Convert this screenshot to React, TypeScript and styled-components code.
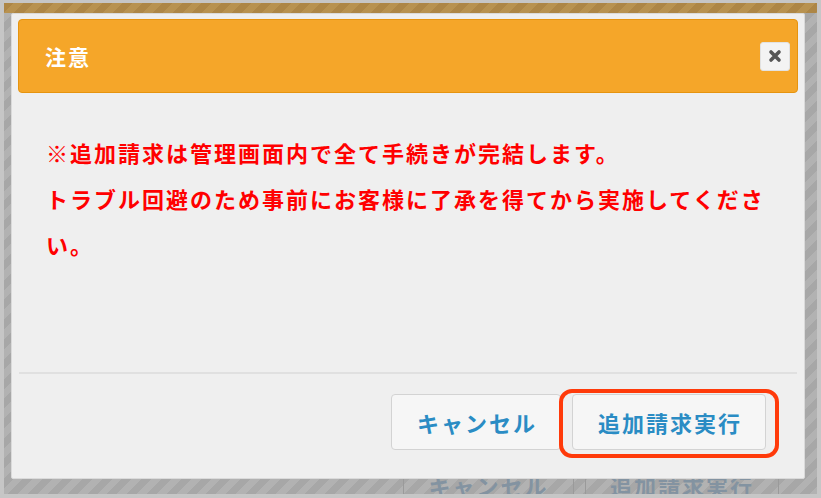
import styled, { createGlobalStyle } from "styled-components";

const GlobalStyle = createGlobalStyle`
  html, body {
    margin: 0;
    padding: 0;
    background: #c6c6c6;
  }
  * {
    box-sizing: border-box;
  }
`;

const font = `"Noto Sans CJK JP", "Noto Sans", sans-serif`;

const Frame = styled.div`
  width: 821px;
  height: 498px;
  border: 4px solid #c6c6c6;
  border-top-width: 3px;
  overflow: hidden;
  font-family: ${font};
`;

const Backdrop = styled.div`
  height: 100%;
  display: flex;
  flex-direction: column;
  background: repeating-linear-gradient(
    135deg,
    #a7a7a7 0px,
    #a7a7a7 7px,
    #b2b2b2 7px,
    #b2b2b2 14px
  );
`;

const TopBand = styled.div`
  height: 10px;
  flex: none;
  background: repeating-linear-gradient(
    135deg,
    #ad8646 0px,
    #ad8646 7px,
    #b89250 7px,
    #b89250 14px
  );
`;

const Modal = styled.div`
  margin: 0 12px 0 7px;
  padding: 5px 6px 6px;
  background: #efefef;
  border: 1px solid #dadada;
  border-radius: 2px;
  flex: none;
`;

const Header = styled.div`
  height: 74px;
  display: flex;
  align-items: center;
  justify-content: space-between;
  padding: 0 7px 0 26px;
  background: #f5a629;
  border: 1px solid #e6940f;
  border-radius: 4px;
`;

const Title = styled.h1`
  margin: 0;
  color: #ffffff;
  font-size: 21px;
  font-weight: 700;
  letter-spacing: 2px;
`;

const CloseButton = styled.button`
  width: 30px;
  height: 29px;
  display: flex;
  align-items: center;
  justify-content: center;
  padding: 0;
  background: #f3f3f3;
  border: 1px solid #e2e2e2;
  border-radius: 3px;
`;

const Body = styled.div`
  height: 279px;
  padding: 36px 28px 0;
`;

const Message = styled.p`
  margin: 0;
  color: #ff0000;
  font-size: 22px;
  font-weight: 700;
  line-height: 46px;
  letter-spacing: 2px;
`;

const Footer = styled.div`
  border-top: 2px solid #e0e0e0;
  margin: 0 1px;
  display: flex;
  justify-content: flex-end;
  gap: 11px;
  padding: 20px 31px 22px 0;
`;

const Button = styled.button`
  position: relative;
  height: 56px;
  padding: 0 23px 0 25px;
  background: #f6f6f6;
  border: 1px solid #d3d3d3;
  border-radius: 4px;
  color: #2a8cc4;
  font-family: ${font};
  font-size: 22px;
  font-weight: 700;
  letter-spacing: 2px;
`;

const Highlight = styled.span`
  position: absolute;
  top: -6px;
  left: -14px;
  right: -14px;
  bottom: -9px;
  border: 4px solid #ff3a0a;
  border-radius: 13px;
  pointer-events: none;
`;

const GhostRow = styled.div`
  flex: 1;
  overflow: hidden;
  display: flex;
  justify-content: flex-end;
  gap: 11px;
  padding: 0 38px 0 0;
`;

const GhostButton = styled.div<{ w: number }>`
  width: ${({ w }) => w}px;
  height: 56px;
  border-left: 1px solid #9a9a9a;
  border-right: 1px solid #9a9a9a;
  text-align: center;
  color: #8393a1;
  font-size: 22px;
  font-weight: 700;
  letter-spacing: 2px;
  line-height: 56px;
  margin-top: -22px;
`;

function CloseIcon() {
  return (
    <svg width="14" height="14" viewBox="0 0 14 14">
      <path
        d="M3 3 L11 11 M11 3 L3 11"
        stroke="#555"
        strokeWidth="3.6"
        strokeLinecap="round"
      />
    </svg>
  );
}

export default function App() {
  return (
    <>
      <GlobalStyle />
      <Frame>
        <Backdrop>
          <TopBand />
          <Modal>
            <Header>
              <Title>注意</Title>
              <CloseButton aria-label="close">
                <CloseIcon />
              </CloseButton>
            </Header>
            <Body>
              <Message>※追加請求は管理画面内で全て手続きが完結します。</Message>
              <Message>
                トラブル回避のため事前にお客様に了承を得てから実施してください。
              </Message>
            </Body>
            <Footer>
              <Button>キャンセル</Button>
              <Button>
                追加請求実行
                <Highlight />
              </Button>
            </Footer>
          </Modal>
          <GhostRow>
            <GhostButton w={171}>キャンセル</GhostButton>
            <GhostButton w={194}>追加請求実行</GhostButton>
          </GhostRow>
        </Backdrop>
      </Frame>
    </>
  );
}
